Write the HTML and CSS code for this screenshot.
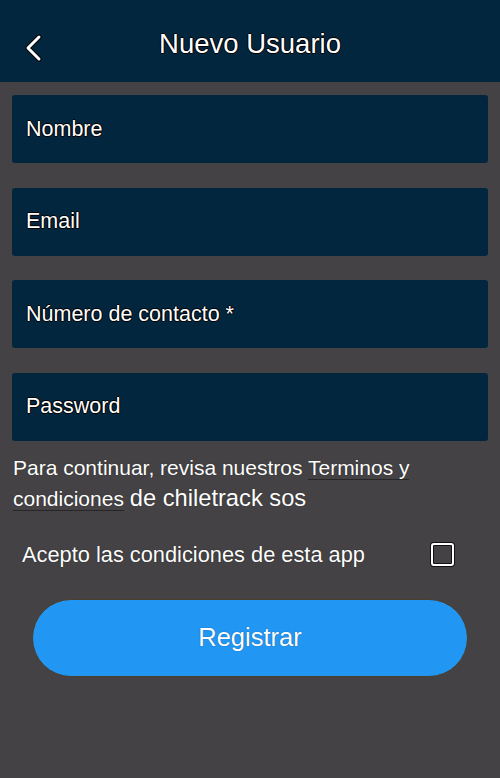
FILE: index.html
```html
<!DOCTYPE html>
<html lang="es">
<head>
    <meta charset="UTF-8">
    <meta name="viewport" content="width=device-width, initial-scale=1.0">
    <title>Nuevo Usuario</title>
    <link rel="stylesheet" href="styles.css">
</head>
<body>

    <header class="topbar">
        <button class="back" type="button" aria-label="Volver">
            <svg width="20" height="28" viewBox="0 0 20 28">
                <path d="M15 3 L4 14 L15 25" fill="none" stroke="#000" stroke-width="5" stroke-linecap="round" stroke-linejoin="round"/>
                <path d="M15 3 L4 14 L15 25" fill="none" stroke="#fff" stroke-width="3" stroke-linecap="round" stroke-linejoin="round"/>
            </svg>
        </button>
        <h1>Nuevo Usuario</h1>
    </header>

    <form class="form">
        <div class="field">Nombre</div>
        <div class="field">Email</div>
        <div class="field">Número de contacto *</div>
        <div class="field">Password</div>

        <p class="terms">
            Para continuar, revisa nuestros <a href="#">Terminos y condiciones</a> <span class="brand">de chiletrack sos</span>
        </p>

        <label class="accept">
            <span>Acepto las condiciones de esta app</span>
            <span class="box"></span>
        </label>

        <button type="submit" class="btn">Registrar</button>
    </form>

</body>
</html>
```

FILE: styles.css
```css
body {
    margin: 0;
    background: #444244;
    color: white;
    font-family: "Liberation Sans", Arial, sans-serif;
    height: 778px;
}
.topbar {
    height: 82px;
    background-color: #03263f;
    display: flex;
    align-items: center;
    justify-content: center;
    position: relative;
}
.topbar h1 {
    margin: 0;
    font-size: 27.5px;
    font-weight: normal;
    margin-top: 5px;
    text-shadow: -1px 0 #000, 1px 0 #000, 0 -1px #000, 0 1px #000;
}
.back {
    position: absolute;
    left: 24px;
    top: 34px;
    background: none;
    border: none;
    padding: 0;
}
.form {
    padding: 13px 12px 0;
    display: flex;
    flex-direction: column;
}
.field {
    height: 68px;
    background-color: #03263f;
    border-radius: 3px;
    margin-bottom: 24.5px;
    padding: 0 14px;
    display: flex;
    align-items: center;
    font-size: 21.5px;
    text-shadow: -1px 0 #000, 1px 0 #000, 0 -1px #000, 0 1px #000;
}
.field:nth-of-type(4) {
    margin-bottom: 0;
}
.terms {
    margin: 11px 0 0 1px;
    font-size: 21px;
    line-height: 31px;
    text-shadow: 0 0 1px #222;
}
.terms a {
    color: white;
    text-decoration: none;
    border-bottom: 1px solid #262626;
}
.brand {
    font-size: 23.7px;
    line-height: 1;
}
.accept {
    display: flex;
    align-items: center;
    justify-content: space-between;
    margin: 28px 34px 0 10px;
    font-size: 21.8px;
    text-shadow: 0 0 1px #111;
}
.box {
    width: 19px;
    height: 19px;
    border: 2.5px solid white;
    border-radius: 3px;
    box-shadow: 0 0 0 1px #111, inset 0 0 0 1px #111;
}
.btn {
    box-sizing: border-box;
    margin: 31px 20px 0;
    height: 78px;
    border-radius: 39px;
    background-color: #2196f3;
    border: 1px solid #4a3f2a;
    color: white;
    font-family: "Liberation Sans", Arial, sans-serif;
    font-size: 25.5px;
    text-shadow: 0 0 1px #0d4a80;
    cursor: pointer;
}
```
